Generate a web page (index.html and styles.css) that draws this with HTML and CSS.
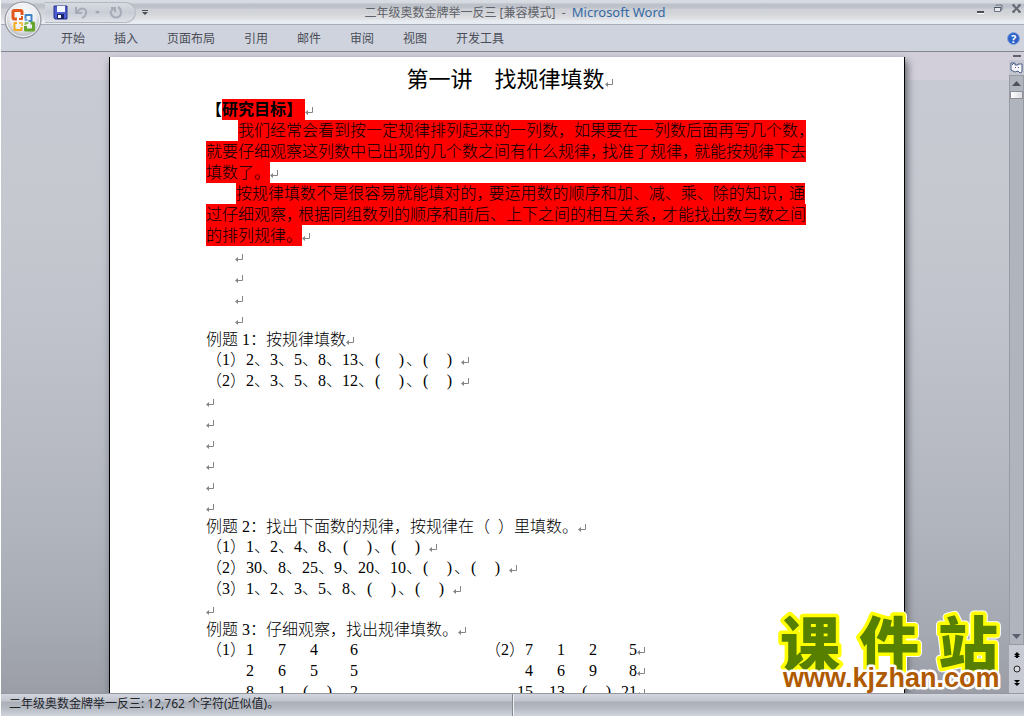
FILE: index.html
```html
<!DOCTYPE html>
<html lang="zh-CN">
<head>
<meta charset="utf-8">
<title>二年级奥数金牌举一反三 [兼容模式] - Microsoft Word</title>
<link rel="stylesheet" href="styles.css">
</head>
<body>
<svg class="defs" aria-hidden="true">
  <symbol id="ret" viewBox="0 0 8 8"><path d="M7.500 0v5.500H1" fill="none" stroke="#858585" stroke-width="1"/><path d="M3 3v5L0 5.500z" fill="#858585"/></symbol>
</svg>
<div class="app">
  <header class="titlebar">
    <button class="office" aria-label="Office 按钮">
      <svg viewBox="0 0 38 38" width="38" height="38">
        <defs><radialGradient id="orb" cx="50%" cy="40%" r="60%"><stop offset="0" stop-color="#fff"/><stop offset=".6" stop-color="#eceef1"/><stop offset="1" stop-color="#a9acb3"/></radialGradient></defs>
        <circle cx="19" cy="19" r="18" fill="url(#orb)" stroke="#8f9299"/>
        <circle cx="19" cy="19" r="16.500" fill="none" stroke="#f6f6f8"/>
        <g fill="none" stroke-linejoin="round">
          <path d="M13 18h-2.500q-1.500 0-1.500-1.500V11q0-1.500 1.500-1.500h6q1.500 0 1.500 1.500v3" stroke="#e2571c" stroke-width="3"/>
          <path d="M15 18h3v-3" stroke="#e2571c" stroke-width="2"/>
          <path d="M21.500 17v-3h6v6h-3" stroke="#3f86c9" stroke-width="2"/>
          <path d="M21.500 17v2h2" stroke="#6da6dc" stroke-width="2"/>
          <path d="M13 22h-2.500v7h7v-3" stroke="#f3ac21" stroke-width="2"/>
          <path d="M15 22h3v3" stroke="#f7c04c" stroke-width="2"/>
          <path d="M21.500 25v4h8v-7h-3" stroke="#64a62a" stroke-width="3"/>
          <path d="M21.500 24v-2h3" stroke="#8cc152" stroke-width="2"/>
        </g>
      </svg>
    </button>
    <div class="quick">
      <button aria-label="保存"><svg width="15" height="15" viewBox="0 0 15 15"><path d="M1 1h13v13H2l-1-1z" fill="#4a5cd0" stroke="#26348c"/><path d="M4 1h8v6H4z" fill="#f3f6ff"/><path d="M4 9h7v5H4z" fill="#1b2561"/><path d="M5 10h3v3H5z" fill="#fff"/></svg></button>
      <button aria-label="撤销"><svg width="15" height="13" viewBox="0 0 15 13"><path d="M2 1v6h6M3 6q4-5 7.500-3t0 7.500L8 12" fill="none" stroke="#a6abb8" stroke-width="2"/></svg></button>
      <button class="tiny" aria-label="撤销选项"><svg width="5" height="3" viewBox="0 0 5 3"><path d="M0 0h5L2.500 3z" fill="#a0a4ae"/></svg></button>
      <button aria-label="重复"><svg width="14" height="13" viewBox="0 0 14 13"><path d="M2 2h4v4M5 2q-4 3-3 6 2 4 6 3.500 4-1 4-5T9 1" fill="none" stroke="#a6abb8" stroke-width="2"/></svg></button>
    </div>
    <button class="more" aria-label="自定义快速访问工具栏"><svg width="6" height="6" viewBox="0 0 6 6"><path d="M0 0h6v1H0zM0 2h6L3 5z" fill="#4c5058"/></svg></button>
    <h1 class="caption">二年级奥数金牌举一反三 [兼容模式]&nbsp; -&nbsp; <span>Microsoft Word</span></h1>
    <div class="window-buttons">
      <button aria-label="最小化"><svg width="9" height="10" viewBox="0 0 9 10"><path d="M1 7h7v2H1z" fill="#4a4d55"/><path d="M1 9h7v1H1z" fill="#fff"/></svg></button>
      <button aria-label="还原"><svg width="9" height="10" viewBox="0 0 9 10"><path d="M2 2V1h6v5H7" fill="none" stroke="#6d7585"/><path d="M.5 3.500h6v4h-6z" fill="#e8eaee" stroke="#6d7585"/><path d="M0 3h7v1H0z" fill="#4a5364"/></svg></button>
      <button aria-label="关闭"><svg width="9" height="10" viewBox="0 0 9 10"><path d="M1 1l7 7M8 1L1 8" stroke="#666b76" stroke-width="2"/><path d="M0 1h3M6 1h3M0 8h3M6 8h3" stroke="#555a65"/></svg></button>
    </div>
  </header>
  <nav class="ribbon">
    <a href="#">开始</a><a href="#">插入</a><a href="#">页面布局</a><a href="#">引用</a><a href="#">邮件</a><a href="#">审阅</a><a href="#">视图</a><a href="#">开发工具</a>
    <button class="help" aria-label="帮助">?</button>
  </nav>
  <div class="workspace">
    <main class="page">
      <h2 class="title">第一讲　找规律填数<svg class="ret"><use href="#ret"/></svg></h2>
      <h3 class="goal">【<mark>研究目标】</mark><svg class="ret"><use href="#ret"/></svg></h3>
      <div class="full first"><mark>我们经常会看到按一定规律排列起来的一列数，如果要在一列数后面再写几个数<i class="half">，</i></mark></div>
      <div class="full"><mark>就要仔细观察这列数中已出现的几个数之间有什么规律<i>，</i>找准了规律<i>，</i>就能按规律下去</mark></div>
      <p><mark>填数了。</mark><svg class="ret"><use href="#ret"/></svg></p>
      <div class="full second"><mark>按规律填数不是很容易就能填对的<i>，</i>要运用数的顺序和加、减、乘、除的知识<i>，</i>通</mark></div>
      <div class="full"><mark>过仔细观察<i>，</i>根据同组数列的顺序和前后、上下之间的相互关系<i>，</i>才能找出数与数之间</mark></div>
      <p><mark>的排列规律。</mark><svg class="ret"><use href="#ret"/></svg></p>
      <p class="indent"><svg class="ret"><use href="#ret"/></svg></p>
      <p class="indent"><svg class="ret"><use href="#ret"/></svg></p>
      <p class="indent"><svg class="ret"><use href="#ret"/></svg></p>
      <p class="indent"><svg class="ret"><use href="#ret"/></svg></p>
      <h3 class="example">例题<b>1</b>：按规律填数<svg class="ret"><use href="#ret"/></svg></h3>
      <p>（1）2、3、5、8、13、<span class="blank"><span>(</span><span>)</span></span>、<span class="blank"><span>(</span><span>)</span></span><svg class="ret spaced"><use href="#ret"/></svg></p>
      <p>（2）2、3、5、8、12、<span class="blank"><span>(</span><span>)</span></span>、<span class="blank"><span>(</span><span>)</span></span><svg class="ret spaced"><use href="#ret"/></svg></p>
      <p><svg class="ret"><use href="#ret"/></svg></p>
      <p><svg class="ret"><use href="#ret"/></svg></p>
      <p><svg class="ret"><use href="#ret"/></svg></p>
      <p><svg class="ret"><use href="#ret"/></svg></p>
      <p><svg class="ret"><use href="#ret"/></svg></p>
      <p><svg class="ret"><use href="#ret"/></svg></p>
      <h3 class="example">例题<b>2</b>：找出下面数的规律，按规律在（&nbsp; ）里填数。<svg class="ret"><use href="#ret"/></svg></h3>
      <p>（1）1、2、4、8、<span class="blank"><span>(</span><span>)</span></span>、<span class="blank"><span>(</span><span>)</span></span><svg class="ret spaced"><use href="#ret"/></svg></p>
      <p>（2）30、8、25、9、20、10、<span class="blank"><span>(</span><span>)</span></span>、<span class="blank"><span>(</span><span>)</span></span><svg class="ret spaced"><use href="#ret"/></svg></p>
      <p>（3）1、2、3、5、8、<span class="blank"><span>(</span><span>)</span></span>、<span class="blank"><span>(</span><span>)</span></span><svg class="ret spaced"><use href="#ret"/></svg></p>
      <p><svg class="ret"><use href="#ret"/></svg></p>
      <h3 class="example">例题<b>3</b>：仔细观察，找出规律填数。<svg class="ret"><use href="#ret"/></svg></h3>
      <table class="numbers">
        <colgroup><col class="c-no"><col class="c-first"><col class="c-num"><col class="c-num"><col class="c-last"><col class="c-no2"><col class="c-first"><col class="c-num"><col class="c-num"><col class="c-last"><col class="c-end"></colgroup>
        <tr><td class="no">（1）</td><td>1</td><td>7</td><td>4</td><td>6</td><td class="no no2">（2）</td><td>7</td><td>1</td><td>2</td><td>5</td><td><svg class="ret"><use href="#ret"/></svg></td></tr>
        <tr><td></td><td>2</td><td>6</td><td>5</td><td>5</td><td></td><td>4</td><td>6</td><td>9</td><td>8</td><td><svg class="ret"><use href="#ret"/></svg></td></tr>
        <tr><td></td><td>8</td><td>1</td><td class="gap"><span class="blank"><span>(</span><span>)</span></span></td><td>2</td><td></td><td>15</td><td>13</td><td class="gap"><span class="blank"><span>(</span><span>)</span></span></td><td>21</td><td><svg class="ret"><use href="#ret"/></svg></td></tr>
      </table>
    </main>
    <aside class="scroll">
      <button class="split" aria-label="拆分"><span></span></button>
      <button class="ruler" aria-label="标尺"><svg width="13" height="13" viewBox="0 0 13 13"><path d="M1 2h4v2h3V3h4v8l-2 1-2-2-3 1-4-2z" fill="#f7f7fb" stroke="#4b5e84"/><path d="M2 4l2-2M5 6l1 1M8 6l1 1" stroke="#4b5e84"/></svg></button>
      <div class="track">
        <button aria-label="向上"><svg width="9" height="5" viewBox="0 0 9 5"><path d="M0 5h9L4.500 0z" fill="#4f535d"/></svg></button>
        <div class="thumb"></div>
        <button class="down" aria-label="向下"><svg width="9" height="5" viewBox="0 0 9 5"><path d="M0 0h9L4.500 5z" fill="#5b6070"/></svg></button>
      </div>
      <div class="browse">
        <button aria-label="上一页"><svg width="6" height="6" viewBox="0 0 6 6"><path d="M3 0l3 3H0zM3 2l3 3H0zM2 4h2v2H2z"/></svg></button>
        <button aria-label="选择浏览对象"><svg width="8" height="8" viewBox="0 0 8 8"><circle cx="4" cy="4" r="3" fill="#d8d9dc" stroke="#222"/></svg></button>
        <button aria-label="下一页"><svg width="6" height="6" viewBox="0 0 6 6"><path d="M3 3L0 0h6zM3 6L0 3h6z"/></svg></button>
      </div>
    </aside>
    <svg class="watermark" viewBox="0 0 236 84" width="236" height="84">
      <g class="wm-name wm-halo"><text x="8" y="58">课</text><text x="87" y="58">件</text><text x="166" y="58">站</text></g>
      <g class="wm-name"><text x="8" y="58">课</text><text x="87" y="58">件</text><text x="166" y="58">站</text></g>
      <text class="wm-url" x="11" y="78">www.kjzhan.com</text>
    </svg>
  </div>
  <footer class="status">
    <span class="count">二年级奥数金牌举一反三: 12,762 个字符(近似值)。</span><span class="rest"></span>
  </footer>
</div>
</body>
</html>
```
FILE: styles.css
```css
* { box-sizing: border-box; }
body { margin: 0; background: #fff; }
button { display: flex; align-items: center; justify-content: center; border: 0; padding: 0; background: none; font: inherit; }
h1, h2, h3, p { margin: 0; font-weight: normal; }
.defs { position: absolute; width: 0; height: 0; }
.app {
  height: 100vh; padding: 0 0 2px 1px; display: flex; flex-direction: column; overflow: hidden;
  font: 12px "Noto Sans", "Noto Sans CJK SC", sans-serif; color: #4a4d57;
}
.titlebar {
  position: relative; flex: none; height: 25px; display: flex; align-items: center; padding-left: 44px;
  background: linear-gradient(#d9dce3 0, #d4d8df 3px, #bcc0c8 4px, #bfc3cb 8px, #cdd0d5 9px, #d3d5d9 14px, #e0e1e3 19px, #e7ebf2 21px, #e7ebf2 24px, #a7abb6 24px);
}
.office { position: absolute; left: 3px; top: 1px; z-index: 2; width: 38px; height: 38px; }
.quick {
  width: 91px; height: 21px; display: flex; align-items: center; gap: 6px; padding-left: 8px;
  border: 1px solid #b4b8c1; border-left: 0; border-radius: 0 11px 11px 0; background: linear-gradient(#d6dae1, #c9cdd5 50%, #dfe2e8);
}
.quick .tiny { margin-right: 3px; }
.more { width: 18px; height: 20px; }
.caption { flex: 1; text-align: center; font-size: 12px; line-height: 25px; color: #5f6269; padding-right: 100px; }
.caption span { font-size: 13px; color: #3469a6; }
.window-buttons { display: flex; align-items: center; gap: 9px; padding: 0 3px 8px 0; }
.ribbon { flex: none; height: 27px; display: flex; align-items: center; gap: 29px; padding: 0 4px 0 60px; background: #cfd3dd; border-bottom: 1px solid #83868c; }
.ribbon a { color: #4a4d57; text-decoration: none; line-height: 24px; padding-top: 2px; }
.help { margin-left: auto; width: 13px; height: 13px; border-radius: 50%; background: #2f62c8; border: 1px solid #86a7dc; color: #fff; font-weight: bold; font-size: 11px; line-height: 11px; }
.workspace {
  position: relative; flex: 1; min-height: 0; display: flex; padding-left: 108px; overflow: hidden;
  background: linear-gradient(#d2cfda 0, #d2cfda 28px, #c8cad3 28px, #c6c8d0 25%, #c0c3cb 42%, #b9bcc5 58%, #b0b4bd 75%, #a5a9b1 90%, #9b9ea6 100%);
}
.page {
  flex: 1; min-width: 0; margin: 5px 104px 0 0; padding: 0 99px 0 96px; overflow: hidden; background: #fff; color: #000;
  border: solid #000; border-width: 0 1px; box-shadow: 2px 4px 8px #55585f;
  font: 300 16px/21px "Liberation Serif", "Noto Sans CJK SC", serif; white-space: nowrap;
}
.page h3, .page p { font-size: 16px; font-weight: 300; line-height: 21px; }
.page p, .full, .goal { height: 21px; }
.title { height: 42px; padding-left: 8px; font-size: 22px; line-height: 46px; font-weight: 400; text-align: center; }
mark { display: inline-block; height: 21px; background: #f00; color: #000; }
.page .goal { font-weight: 700; }
.goal mark { padding-right: 3px; }
.full { display: flex; }
.full mark { flex: 1; text-align: justify; text-align-last: justify; }
.full.first { padding-left: 32px; }
.full.second { padding-left: 30px; }
.full i { display: inline-block; width: 12px; font-style: normal; }
.full .half { width: 8px; }
.indent { padding-left: 29px; }
.page .example { line-height: 19px; height: 19px; }
.example b { display: inline-block; width: 12px; text-align: right; font-weight: 300; }
.blank { display: inline-flex; justify-content: space-between; width: 32px; padding: 0 2px 0 1px; }
.ret { width: 8px; height: 8px; }
.ret.spaced { margin-left: 7px; }
.numbers { width: 439px; border-collapse: collapse; line-height: 21px; table-layout: fixed; }
.numbers td { height: 21px; padding: 0; text-align: right; }
.numbers .no, .numbers .gap { text-align: left; }
.numbers .no2 { padding-left: 127px; }
.numbers .gap { padding-left: 16px; }
.c-no { width: 32px; }
.c-no2 { width: 159px; }
.c-first { width: 16px; }
.c-num { width: 32px; }
.c-last { width: 40px; }
.c-end { width: 8px; }
.watermark { position: absolute; right: 16px; bottom: 0; }
.watermark text { paint-order: stroke; stroke-linejoin: round; }
.wm-name text { font: 900 60px "Noto Sans CJK SC", sans-serif; fill: #578000; stroke: #ff0; stroke-width: 7px; }
.wm-halo text { stroke: #fff; stroke-width: 9px; }
.wm-url { font: 700 27px "Liberation Sans", sans-serif; fill: #b05a00; stroke: #fff; stroke-width: 5px; }
.scroll { flex: none; width: 15px; display: flex; flex-direction: column; align-items: stretch; background: #c8cad3; }
.split { height: 8px; background: #d2cfda; }
.split span { width: 8px; height: 2px; background: #5f626a; }
.ruler { height: 15px; background: #c3c6cf; }
.track { flex: 1; display: flex; flex-direction: column; gap: 5px; padding-top: 5px; background: #b0b4bd; border: 1px solid #989ba4; }
.thumb { height: 8px; border: 1px solid #8b8e96; background: linear-gradient(90deg, #fff, #dcdde1); }
.down { margin-top: auto; padding-bottom: 5px; }
.browse { height: 48px; display: flex; flex-direction: column; align-items: center; justify-content: space-evenly; }
.status {
  flex: none; height: 23px; display: flex; align-items: stretch; color: #22252c; line-height: 20px; border-top: 1px solid #9598a0;
  background: linear-gradient(#d3d6de 0, #c0c4cc 7px, #abafb8 8px, #b5b9c2 14px, #cdd1d8 21px);
}
.count { flex: 1; padding-left: 8px; border-right: 1px solid #85888f; }
.rest { flex: 1; padding-left: 8px; border-left: 1px solid #f0f1f4; }
```
